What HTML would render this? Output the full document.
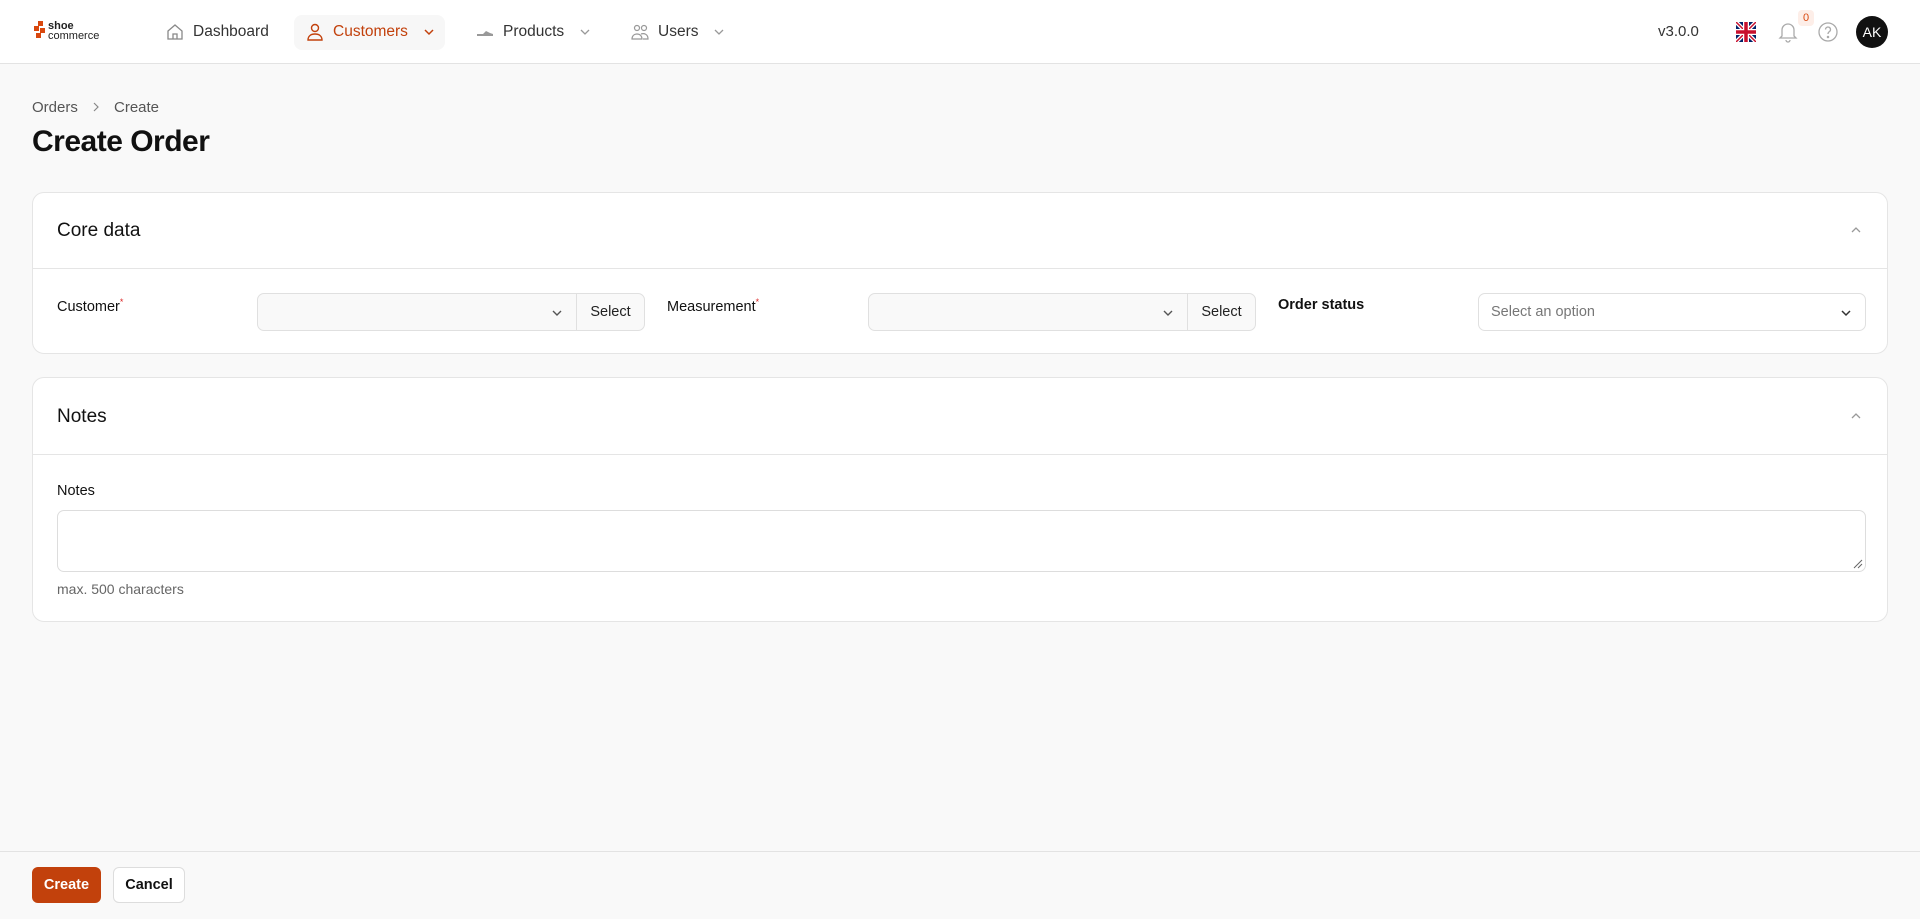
<!DOCTYPE html>
<html><head><meta charset="utf-8"><style>
*{box-sizing:border-box;margin:0;padding:0}
body{width:1920px;height:919px;background:#f9f9f9;font-family:"Liberation Sans",sans-serif;color:#111;position:relative;overflow:hidden}
.abs{position:absolute}
header{position:absolute;left:0;top:0;width:1920px;height:64px;background:#fff;border-bottom:1px solid #e3e3e3}
.nav{position:absolute;top:22px;font-size:15.5px;color:#333;display:flex;align-items:center;gap:8px}
.card{position:absolute;left:32px;width:1856px;background:#fff;border:1px solid #e5e5e5;border-radius:12px}
.ct{position:absolute;left:24px;font-size:19px;color:#111}
.div{position:absolute;left:0;right:0;height:1px;background:#e5e5e5}
.lbl{position:absolute;font-size:14.5px;color:#111}
.lbl sup{color:#dc2626;font-size:9px}
.sel{position:absolute;height:38px;border:1px solid #e0e0e0;border-radius:7px;background:#f9f9f9}
.btnsel{position:absolute;right:0;top:0;bottom:0;width:68px;border-left:1px solid #e0e0e0;font-size:14.5px;display:flex;align-items:center;justify-content:center;color:#222}
</style></head><body>
<header>
 <div class="abs" style="left:34px;top:21px;width:12px;height:22px">
  <div class="abs" style="left:4px;top:0;width:5px;height:5px;background:#d9480f"></div>
  <div class="abs" style="left:0;top:5px;width:5px;height:5px;background:#d9480f"></div>
  <div class="abs" style="left:6px;top:7px;width:5px;height:5px;background:#d9480f"></div>
  <div class="abs" style="left:2px;top:12px;width:5px;height:5px;background:#d9480f"></div>
 </div>
 <div class="abs" style="left:48px;top:21px;font-size:11px;line-height:10px;color:#222"><b>shoe</b><br>commerce</div>
 <div class="nav" style="left:165px"><svg width="20" height="20" viewBox="0 0 20 20" fill="none" stroke="#888" stroke-width="1.3"><path d="M3 9L10 3l7 6v8H3z M8 17v-5h4v5"/></svg><span>Dashboard</span></div>
 <div class="abs" style="left:294px;top:15px;width:151px;height:35px;background:#f7f7f7;border-radius:8px"></div>
 <div class="nav" style="left:305px;color:#c2410c"><svg width="20" height="20" viewBox="0 0 20 20" fill="none" stroke="#c2410c" stroke-width="1.4"><circle cx="10" cy="6" r="3.5"/><path d="M3 18c0-4 3-6 7-6s7 2 7 6z"/></svg><span>Customers</span><svg width="14" height="14" viewBox="0 0 14 14" fill="none" stroke="#c2410c" stroke-width="1.5" style="margin-left:6px"><path d="M3 5l4 4 4-4"/></svg></div>
 <div class="nav" style="left:475px"><svg width="20" height="20" viewBox="0 0 20 20"><path d="M2 12h6l3-3 4 2 3 1v2H2z" fill="#999"/></svg><span>Products</span><svg width="14" height="14" viewBox="0 0 14 14" fill="none" stroke="#999" stroke-width="1.3" style="margin-left:6px"><path d="M3 5l4 4 4-4"/></svg></div>
 <div class="nav" style="left:630px"><svg width="20" height="20" viewBox="0 0 20 20" fill="none" stroke="#999" stroke-width="1.2"><circle cx="7" cy="6" r="2.5"/><circle cx="14" cy="6" r="2.5"/><path d="M2 17c0-3 2-5 5-5s5 2 5 5z M11 12c3-1 7 0 7 5h-5"/></svg><span>Users</span><svg width="14" height="14" viewBox="0 0 14 14" fill="none" stroke="#999" stroke-width="1.3" style="margin-left:6px"><path d="M3 5l4 4 4-4"/></svg></div>
 <div class="abs" style="left:1658px;top:23px;font-size:15px;color:#333">v3.0.0</div>
 <svg class="abs" style="left:1736px;top:22px" width="20" height="20" viewBox="0 0 20 20"><rect width="20" height="20" rx="3" fill="#012169"/><path d="M0 0L20 20M20 0L0 20" stroke="#fff" stroke-width="4"/><path d="M0 0L20 20M20 0L0 20" stroke="#c8102e" stroke-width="1.5"/><path d="M10 0v20M0 10h20" stroke="#fff" stroke-width="6"/><path d="M10 0v20M0 10h20" stroke="#c8102e" stroke-width="3.5"/></svg>
 <svg class="abs" style="left:1778px;top:21px" width="20" height="22" viewBox="0 0 20 22" fill="none" stroke="#aaa" stroke-width="1.3"><path d="M4 15V9a6 6 0 0112 0v6l2 2H2z M8 19a2 2 0 004 0"/></svg>
 <div class="abs" style="left:1798px;top:10px;width:16px;height:16px;background:#fdeee8;border-radius:4px;color:#d9480f;font-size:11px;text-align:center;line-height:16px">0</div>
 <svg class="abs" style="left:1817px;top:21px" width="22" height="22" viewBox="0 0 22 22" fill="none" stroke="#aaa" stroke-width="1.3"><circle cx="11" cy="11" r="9"/><path d="M8.5 8.5a2.5 2.5 0 114 2c-1 .7-1.5 1.2-1.5 2.5"/><circle cx="11" cy="16" r=".6" fill="#aaa"/></svg>
 <div class="abs" style="left:1856px;top:16px;width:32px;height:32px;border-radius:50%;background:#111;color:#fff;font-size:14px;text-align:center;line-height:32px">AK</div>
</header>
<div class="abs" style="left:32px;top:99px;font-size:15px;color:#555">Orders</div>
<svg class="abs" style="left:90px;top:100px" width="12" height="14" viewBox="0 0 12 14" fill="none" stroke="#888" stroke-width="1.2"><path d="M4 3l4 4-4 4"/></svg>
<div class="abs" style="left:114px;top:99px;font-size:15px;color:#555">Create</div>
<div class="abs" style="left:32px;top:125px;font-size:30px;font-weight:bold;letter-spacing:-0.5px">Create Order</div>

<div class="card" style="top:192px;height:162px">
 <div class="ct" style="top:27px">Core data</div>
 <svg class="abs" style="right:24px;top:30px" width="14" height="14" viewBox="0 0 14 14" fill="none" stroke="#999" stroke-width="1.3"><path d="M3 9l4-4 4 4"/></svg>
 <div class="div" style="top:75px"></div>
 <div class="lbl" style="left:24px;top:104px">Customer<sup>*</sup></div>
 <div class="sel" style="left:224px;top:100px;width:388px"><svg class="abs" style="right:80px;top:12px" width="14" height="14" viewBox="0 0 14 14" fill="none" stroke="#555" stroke-width="1.4"><path d="M3 5l4 4 4-4"/></svg><div class="btnsel">Select</div></div>
 <div class="lbl" style="left:634px;top:104px">Measurement<sup>*</sup></div>
 <div class="sel" style="left:835px;top:100px;width:388px"><svg class="abs" style="right:80px;top:12px" width="14" height="14" viewBox="0 0 14 14" fill="none" stroke="#555" stroke-width="1.4"><path d="M3 5l4 4 4-4"/></svg><div class="btnsel">Select</div></div>
 <div class="lbl" style="left:1245px;top:104px;font-weight:600">Order status</div>
 <div class="sel" style="left:1445px;top:100px;width:388px;background:#fff"><span class="abs" style="left:12px;top:10px;font-size:14.5px;color:#777">Select an option</span><svg class="abs" style="right:12px;top:12px" width="14" height="14" viewBox="0 0 14 14" fill="none" stroke="#333" stroke-width="1.5"><path d="M3 5l4 4 4-4"/></svg></div>
</div>

<div class="card" style="top:377px;height:245px">
 <div class="ct" style="top:28px">Notes</div>
 <svg class="abs" style="right:24px;top:31px" width="14" height="14" viewBox="0 0 14 14" fill="none" stroke="#999" stroke-width="1.3"><path d="M3 9l4-4 4 4"/></svg>
 <div class="div" style="top:76px"></div>
 <div class="lbl" style="left:24px;top:105px">Notes</div>
 <div class="abs" style="left:24px;top:132px;width:1809px;height:62px;border:1px solid #ddd;border-radius:7px"><svg class="abs" style="right:2px;bottom:2px" width="12" height="12" viewBox="0 0 12 12" stroke="#666"><path d="M11 3L3 11M11 7L7 11"/></svg></div>
 <div class="abs" style="left:24px;top:203px;font-size:14px;color:#666">max. 500 characters</div>
</div>

<div class="abs" style="left:0;top:851px;width:1920px;height:1px;background:#e3e3e3"></div>
<div class="abs" style="left:32px;top:867px;width:69px;height:36px;background:#c2410c;border-radius:6px;color:#fff;font-size:14.5px;font-weight:bold;text-align:center;line-height:36px">Create</div>
<div class="abs" style="left:113px;top:867px;width:72px;height:36px;background:#fff;border:1px solid #ddd;border-radius:6px;font-size:14.5px;font-weight:bold;text-align:center;line-height:34px">Cancel</div>
</body></html>
